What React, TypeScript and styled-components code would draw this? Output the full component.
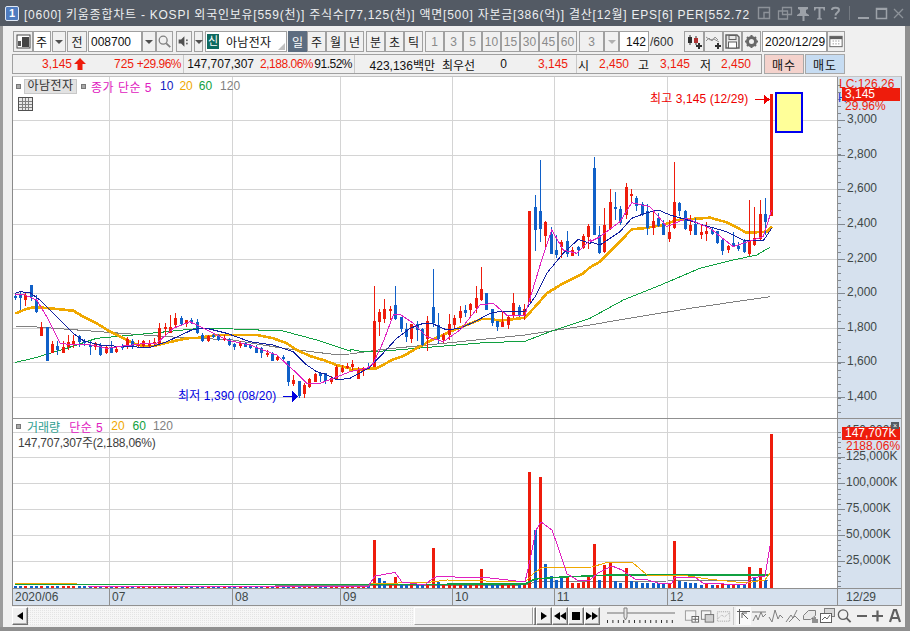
import React from 'react';
import styled, { createGlobalStyle } from 'styled-components';

const RED = '#ee1c0c';
const BLUE = '#1060c8';
const MAGENTA = '#e020c0';
const NAVY = '#1020a0';
const ORANGE = '#f0a800';
const GREEN = '#10a040';
const GREY = '#808080';
const FONT = '"Liberation Sans", "Noto Sans CJK KR", sans-serif';

type Pt = [number, number];
type Candle = { x: number; top: number; bottom: number; high: number; low: number; up: boolean };
type Row = [number, number, number, number, number, number];
type VolBar = [number, number, number];

// values were read off 3x crops, so each block has its own origin
const scale = (ox: number, oy: number, rows: Row[]): Candle[] =>
  rows.map(([x, top, bottom, high, low, up]) => ({
    x: Math.round(ox + x / 3),
    top: oy + top / 3,
    bottom: oy + bottom / 3,
    high: oy + high / 3,
    low: oy + low / 3,
    up: up === 1,
  }));

const line = (ox: number, oy: number, pts: Pt[]): Pt[] => pts.map(([x, y]) => [ox + x / 3, oy + y / 3]);

const candles: Candle[] = [
  ...scale(0, 270, [
    [46, 78, 85, 68, 90, 0], [61, 75, 83, 65, 120, 0], [76, 75, 90, 68, 107, 1], [94, 45, 80, 45, 93, 0],
    [109, 90, 125, 75, 128, 0], [124, 172, 197, 155, 197, 1], [142, 172, 272, 172, 272, 0], [157, 222, 250, 212, 250, 1],
    [172, 228, 240, 212, 255, 0], [190, 230, 248, 212, 248, 1], [205, 216, 230, 195, 240, 1], [220, 212, 224, 195, 235, 1],
    [238, 197, 215, 195, 230, 0], [253, 212, 220, 208, 228, 0], [270, 225, 230, 212, 255, 0], [286, 220, 230, 215, 240, 1],
    [301, 225, 255, 220, 258, 0], [319, 230, 250, 225, 252, 1], [334, 232, 248, 212, 250, 0], [349, 237, 245, 230, 250, 1],
    [367, 228, 232, 222, 240, 0], [382, 208, 232, 200, 238, 1], [397, 212, 232, 208, 236, 0], [415, 222, 228, 210, 232, 1],
    [430, 214, 228, 210, 232, 1], [448, 220, 228, 210, 233, 1], [463, 216, 220, 205, 225, 1], [478, 175, 222, 160, 225, 1],
    [496, 172, 178, 160, 195, 1], [511, 172, 188, 135, 190, 1], [526, 143, 165, 128, 170, 1], [544, 143, 162, 138, 165, 0],
    [559, 150, 162, 150, 172, 1], [574, 150, 160, 145, 163, 0], [592, 155, 190, 148, 192, 0], [607, 195, 213, 190, 216, 0],
    [625, 198, 214, 195, 216, 1], [640, 195, 200, 188, 205, 0], [655, 195, 210, 192, 212, 0], [673, 203, 208, 195, 213, 1],
    [688, 208, 225, 205, 228, 0], [703, 222, 230, 220, 240, 0], [721, 220, 228, 212, 235, 1], [736, 218, 230, 215, 232, 0],
    [751, 225, 233, 222, 236, 0], [769, 230, 248, 225, 250, 0], [784, 233, 248, 232, 265, 0], [802, 250, 252, 240, 262, 1],
    [817, 250, 272, 245, 273, 0], [832, 262, 270, 258, 272, 1], [850, 260, 268, 255, 275, 0], [865, 272, 337, 272, 347, 0],
    [880, 330, 342, 316, 347, 1], [898, 333, 378, 333, 385, 0], [913, 345, 372, 340, 385, 1], [928, 327, 350, 323, 353, 1],
    [946, 312, 335, 310, 337, 1], [961, 310, 318, 310, 337, 0], [976, 310, 333, 308, 342, 0], [994, 325, 335, 318, 342, 1],
    [1009, 290, 327, 285, 330, 1], [1027, 295, 305, 285, 310, 1], [1042, 288, 295, 280, 298, 1], [1057, 283, 292, 270, 300, 1],
    [1075, 300, 327, 290, 328, 1], [1090, 293, 302, 290, 318, 1], [1105, 290, 295, 278, 296, 0],
  ]),
  ...scale(350, 150, [
    [73, 513, 650, 408, 650, 1], [88, 487, 515, 478, 558, 1], [103, 478, 507, 448, 518, 1], [121, 477, 483, 468, 510, 1],
    [136, 465, 508, 408, 510, 0], [154, 500, 537, 500, 545, 0], [169, 537, 562, 520, 575, 0], [184, 522, 567, 522, 578, 1],
    [202, 522, 540, 513, 572, 0], [217, 537, 585, 535, 587, 0], [232, 513, 567, 498, 602, 1], [250, 471, 518, 357, 530, 0],
    [265, 525, 568, 488, 581, 0], [280, 555, 570, 548, 578, 1], [298, 522, 555, 491, 570, 1], [313, 504, 525, 495, 535, 1],
    [331, 483, 504, 468, 518, 1], [346, 480, 490, 465, 502, 0], [361, 461, 480, 458, 498, 1], [379, 444, 474, 408, 488, 1],
    [394, 417, 450, 351, 452, 1], [409, 429, 480, 429, 480, 0], [427, 477, 518, 477, 528, 0], [442, 513, 530, 513, 543, 0],
    [457, 515, 530, 483, 530, 1], [475, 502, 525, 498, 537, 1], [490, 459, 498, 429, 505, 1], [508, 471, 498, 465, 502, 0],
    [523, 477, 498, 462, 510, 1], [538, 183, 455, 183, 455, 1], [556, 171, 240, 135, 302, 0], [571, 183, 237, 30, 276, 0],
    [586, 216, 258, 213, 290, 1], [604, 252, 312, 232, 312, 0], [619, 300, 315, 255, 325, 0], [634, 276, 291, 270, 325, 1],
    [652, 273, 312, 243, 320, 0], [667, 300, 318, 290, 318, 1], [685, 291, 300, 288, 318, 0], [700, 258, 294, 252, 296, 1],
    [715, 228, 262, 222, 296, 1], [733, 54, 255, 21, 255, 0], [748, 255, 310, 228, 312, 0],
  ]),
  ...scale(590, 150, [
    [43, 225, 305, 174, 308, 1], [61, 156, 237, 117, 240, 1], [76, 171, 177, 126, 210, 0], [91, 177, 218, 168, 225, 0],
    [109, 111, 196, 99, 208, 1], [124, 132, 138, 117, 156, 1], [139, 144, 168, 138, 183, 0], [157, 162, 195, 156, 198, 0],
    [172, 183, 234, 162, 255, 0], [190, 213, 234, 186, 255, 1], [205, 204, 228, 189, 232, 0], [220, 219, 255, 210, 255, 0],
    [238, 246, 267, 210, 276, 1], [253, 156, 234, 36, 237, 1], [268, 159, 183, 156, 198, 0], [286, 183, 237, 180, 240, 0],
    [301, 225, 243, 195, 255, 1], [316, 222, 255, 204, 255, 0], [334, 246, 255, 225, 267, 1], [349, 243, 252, 216, 273, 1],
    [367, 240, 252, 234, 255, 0], [382, 243, 279, 243, 282, 0], [397, 270, 303, 267, 315, 0], [415, 288, 300, 285, 309, 1],
    [430, 279, 291, 246, 291, 0], [445, 288, 297, 276, 303, 0], [463, 270, 306, 267, 309, 0], [478, 270, 312, 150, 318, 1],
    [493, 264, 285, 171, 288, 1], [511, 192, 267, 150, 270, 1], [526, 192, 216, 144, 255, 0],
  ]),
  { x: 771, top: 94, bottom: 216, high: 94, low: 216, up: true },
];

const ma5: Pt[] = [
  ...line(0, 270, [[46, 72], [75, 75], [110, 90], [140, 140], [180, 220], [220, 225], [260, 222], [320, 235], [370, 228], [420, 222], [470, 220], [520, 175], [570, 155], [620, 180], [680, 210], [750, 225], [830, 255], [880, 300], [920, 340], [960, 340], [1000, 325], [1050, 305]]),
  ...line(350, 150, [[50, 655], [70, 640], [100, 575], [130, 495], [150, 493], [190, 520], [230, 560], [280, 575], [330, 540], [390, 465], [430, 460], [470, 495], [525, 495], [575, 330], [605, 240], [640, 300], [680, 310], [720, 270]]),
  ...line(590, 150, [[0, 275], [30, 260], [90, 215], [125, 158], [180, 170], [230, 230], [290, 205], [360, 235], [430, 290], [490, 270], [520, 260], [545, 180]]),
];
const ma10: Pt[] = [
  ...line(0, 270, [[46, 70], [60, 65], [90, 68], [120, 90], [160, 130], [220, 190], [250, 212], [300, 225], [370, 230], [450, 232], [500, 215], [580, 178], [620, 175], [680, 190], [750, 215], [820, 225], [880, 245], [920, 285], [950, 305], [975, 312], [1010, 330], [1050, 325]]),
  ...line(350, 150, [[55, 655], [90, 620], [140, 565], [180, 535], [220, 520], [250, 522], [290, 540], [330, 535], [380, 512], [420, 490], [460, 483], [525, 483], [555, 440], [590, 370], [640, 310], [685, 268], [720, 280]]),
  ...line(590, 150, [[0, 275], [30, 285], [60, 265], [90, 245], [125, 205], [165, 190], [205, 180], [240, 195], [300, 212], [340, 225], [410, 245], [460, 270], [520, 272], [545, 235]]),
];
const ma20: Pt[] = [
  ...line(0, 270, [[46, 130], [60, 125], [75, 118], [95, 113], [130, 113], [170, 117], [220, 122], [250, 140], [290, 160], [330, 185], [370, 205], [400, 220], [430, 228], [460, 228], [500, 218], [560, 205], [600, 203], [650, 195], [770, 195], [820, 205], [860, 220], [890, 240], [930, 258], [970, 270], [1010, 285], [1050, 295]]),
  ...line(350, 150, [[0, 660], [80, 655], [130, 628], [160, 618], [200, 595], [250, 568], [300, 545], [350, 525], [395, 507], [420, 507], [450, 512], [525, 503], [560, 465], [590, 430], [640, 400], [700, 370]]),
  ...line(590, 150, [[0, 352], [30, 335], [70, 295], [125, 238], [160, 235], [220, 225], [260, 210], [360, 203], [410, 217], [470, 248], [530, 245], [545, 230]]),
];
const ma60: Pt[] = [
  ...line(0, 270, [[46, 277], [100, 265], [200, 235], [290, 205], [400, 195], [500, 185], [600, 175], [700, 177], [850, 183], [950, 210], [1050, 243]]),
  ...line(350, 150, [[0, 598], [40, 605], [75, 605], [200, 595], [400, 578], [525, 574], [600, 545], [720, 505]]),
  ...line(590, 150, [[0, 505], [100, 450], [200, 410], [330, 355], [430, 330], [500, 315], [540, 292]]),
];
const ma120: Pt[] = [
  ...line(0, 270, [[46, 168], [100, 170], [300, 185], [500, 200], [700, 210], [850, 235], [1000, 253]]),
  ...line(350, 150, [[0, 612], [100, 598], [300, 578], [525, 555], [720, 525]]),
  ...line(590, 150, [[100, 508], [300, 475], [540, 440]]),
];

// volume bars that stand out: x, top y, red (1) or blue (0)
const volumeBars: VolBar[] = [
  [374, 540, 1], [379, 578, 0], [384, 581, 0], [395, 577, 1], [433, 548, 1], [438, 582, 0],
  ...([
    [75, 117, 1], [270, 102, 0], [288, 138, 0], [303, 150, 0], [320, 142, 0], [337, 140, 1], [353, 160, 1], [370, 160, 1],
    [385, 155, 1], [400, 138, 1], [418, 42, 1], [433, 150, 0], [448, 105, 1], [465, 100, 1], [480, 152, 0], [497, 158, 0],
    [513, 113, 1], [530, 152, 0], [545, 155, 0], [562, 158, 0], [577, 158, 0], [595, 160, 0], [610, 160, 0], [625, 163, 0],
    [640, 160, 1], [658, 33, 1], [673, 152, 0], [690, 156, 0], [706, 158, 0], [722, 160, 0], [738, 165, 0], [755, 162, 1],
    [771, 165, 0], [787, 165, 1], [803, 162, 1], [819, 165, 0], [835, 162, 1], [851, 165, 0], [867, 165, 0], [883, 110, 1],
    [898, 145, 0], [915, 113, 1], [932, 150, 0],
  ] as VolBar[]).map(([x, y, up]): VolBar => [455 + x / 3, 530 + y / 3, up]),
  [529, 472, 1], [535, 530, 0], [540, 477, 1], [771, 434, 1],
];

const volumeBar = (c: Candle) => {
  const hit = volumeBars.find(([x]) => Math.abs(x - c.x) < 2.5);
  if (hit) return { top: hit[1], color: hit[2] ? RED : BLUE };
  return { top: c.x > 372 ? 584 : 586, color: c.up ? RED : BLUE };
};

const volMa5: Pt[] = [
  [88, 586.5], [270, 586.5], [368, 586.5], [375, 576], [395, 572.5], [402, 582], [425, 585], [432, 579], [437, 576.5], [490, 578], [525, 582], [530, 560], [536, 530], [541, 522], [552, 530], [558, 547], [567, 574], [578, 580.5], [590, 580], [598, 573], [612, 566], [622, 570], [635, 579], [648, 580], [658, 583], [672, 583], [675, 577], [695, 577], [703, 583], [745, 585], [752, 578], [765, 576], [770, 546],
];
const volMa20Head: Pt[] = [[15, 583], [77, 583]];
const volMa20: Pt[] = [
  [370, 583.5], [427, 582.5], [447, 580], [525, 582], [535, 572], [542, 568], [592, 567], [605, 563], [632, 562], [647, 575], [688, 576], [708, 579], [745, 583], [765, 580], [770, 573],
];
const volMa60: Pt[] = [
  [15, 584.5], [275, 584.5], [370, 584.5], [525, 584], [535, 579], [562, 577], [612, 575], [672, 575], [768, 575],
];
const volMa120: Pt[] = [
  [275, 585.5], [525, 585], [535, 582], [668, 581], [698, 580], [768, 580],
];

const priceTicks = [
  ['3,000', 120], ['2,800', 155], ['2,600', 189], ['2,400', 224], ['2,200', 259],
  ['2,000', 293], ['1,800', 328], ['1,600', 362], ['1,400', 397],
] as const;
const volumeTicks = [
  ['125,000K', 457], ['100,000K', 483], ['75,000K', 509], ['50,000K', 535], ['25,000K', 561],
] as const;
const monthLines = [109, 232, 340, 452, 554, 667];
const dateCells = [
  { label: '2020/06', w: 97 }, { label: '07', w: 123 }, { label: '08', w: 108 }, { label: '09', w: 112 },
  { label: '10', w: 102 }, { label: '11', w: 113 }, { label: '12', w: 170 },
];
const intervals = ['1', '3', '5', '10', '15', '30', '45', '60'];
const sliderTicks = Array.from({ length: 13 }, (_, i) => 3 + i * 5.4);

const toPoints = (pts: Pt[]) => pts.map(([x, y]) => `${x.toFixed(1)},${y.toFixed(1)}`).join(' ');

const GlobalStyle = createGlobalStyle`
  html, body { margin: 0; padding: 0; width: 910px; height: 631px; overflow: hidden; background: #f0f0f0; }
  * { box-sizing: border-box; }
  body { font-family: ${FONT}; font-size: 12px; }
`;

const Frame = styled.div`
  width: 910px;
  height: 631px;
  display: flex;
  flex-direction: column;
  background: #f0f0f0;
  border-bottom: 4px solid #8f8f8f;
`;

const TitleBar = styled.div`
  height: 26px;
  flex: none;
  display: flex;
  align-items: center;
  padding-left: 5px;
  background: #535a64;
  color: #eceef0;
  overflow: hidden;
`;

const Badge = styled.div`
  width: 14px;
  height: 15px;
  flex: none;
  border: 1px solid #dfe8f5;
  border-radius: 2px;
  background: #4f7cc0;
  color: #fff;
  font-weight: 700;
  font-size: 11px;
  line-height: 13px;
  text-align: center;
`;

const TitleText = styled.div`
  width: 731px;
  flex: none;
  margin-left: 5px;
  font-size: 12px;
  letter-spacing: 0.76px;
  white-space: pre;
  overflow: hidden;
`;

const WindowIcons = styled.div`
  display: flex;
  align-items: center;
`;

const Body = styled.div`
  flex: 1;
  display: flex;
  flex-direction: column;
  padding: 5px 8px 2px 0;
  border-left: 3px solid #9c9c9c;
  border-right: 5px solid #8f8f8f;
`;

const Toolbar = styled.div`
  height: 21px;
  flex: none;
  display: flex;
  align-items: stretch;
  margin-left: 10px;
`;

const ToolButton = styled.div<{ $w: number; $gap?: number; $active?: boolean; $faint?: boolean }>`
  width: ${p => p.$w}px;
  margin-left: ${p => p.$gap ?? 0}px;
  flex: none;
  display: flex;
  align-items: center;
  justify-content: center;
  border: 1px solid ${p => (p.$active ? '#5d6d80' : '#a0a0a0')};
  background: ${p => (p.$active ? '#5d6d80' : '#f0f0f0')};
  color: ${p => (p.$active ? '#fff' : p.$faint ? '#8a8a8a' : '#202020')};
  font-size: 12px;
`;

const Field = styled.div<{ $w: number; $gap?: number; $right?: boolean }>`
  width: ${p => p.$w}px;
  margin-left: ${p => p.$gap ?? 0}px;
  flex: none;
  display: flex;
  align-items: center;
  justify-content: ${p => (p.$right ? 'flex-end' : 'flex-start')};
  padding: 0 2px;
  border: 1px solid #a0a0a0;
  background: #fff;
  color: #101010;
  font-size: 12px;
  white-space: nowrap;
`;

const NameField = styled(Field)`
  position: relative;
  gap: 7px;
  padding-left: 1px;
  letter-spacing: 0.3px;
  &::after {
    content: '';
    position: absolute;
    right: 1px;
    bottom: 1px;
    border-style: solid;
    border-width: 0 0 7px 7px;
    border-color: transparent transparent #c0c0c0 transparent;
  }
`;

const MarketTag = styled.span`
  width: 12px;
  height: 15px;
  flex: none;
  background: #0e6a60;
  color: #fff;
  font-size: 11px;
  line-height: 15px;
  letter-spacing: 0;
  text-align: center;
`;

const Caret = styled.span<{ $light?: boolean }>`
  border-style: solid;
  border-width: 4px 4px 0;
  border-color: ${p => (p.$light ? '#b0b0b0' : '#505050')} transparent transparent;
`;

const PlainLabel = styled.span<{ $w: number; $gap?: number }>`
  width: ${p => p.$w}px;
  margin-left: ${p => p.$gap ?? 0}px;
  flex: none;
  display: flex;
  align-items: center;
  color: #303030;
`;

const QuoteRow = styled.div`
  height: 20px;
  flex: none;
  display: flex;
  margin: 2px 0 2px 9px;
`;

const QuoteBar = styled.div`
  width: 750px;
  flex: none;
  display: flex;
  border: 1px solid #a0a0a0;
`;

const QuoteCell = styled.div<{ $w: number }>`
  width: ${p => p.$w}px;
  flex: none;
  display: flex;
  align-items: center;
  border-right: 1px solid #c8c8c8;
  white-space: nowrap;
  &:last-child { border-right: 0; }
`;

const Quote = styled.span<{ $w: number; $red?: boolean; $tight?: boolean }>`
  width: ${p => p.$w}px;
  flex: none;
  text-align: right;
  color: ${p => (p.$red ? RED : '#101010')};
  font-size: 12px;
  letter-spacing: ${p => (p.$tight ? '-0.5px' : '0')};
`;

const UpArrow = styled.svg`
  width: 14px;
  height: 14px;
  flex: none;
  margin-left: 1px;
`;

const TradeButton = styled.div<{ $bg: string; $gap: number }>`
  width: 40px;
  margin-left: ${p => p.$gap}px;
  flex: none;
  display: flex;
  align-items: center;
  justify-content: center;
  background: ${p => p.$bg};
  border: 1px solid #a8a8a8;
  color: #101010;
  letter-spacing: 1px;
`;

const ChartBox = styled.div`
  flex: none;
  width: 890px;
  margin-left: 9px;
  border-left: 1px solid #8a8a8a;
  border-top: 1px solid #c4c4c4;
  border-right: 1px solid #a0a0a0;
  display: flex;
  flex-direction: column;
`;

const Pane = styled.div<{ $h: number; $divided?: boolean }>`
  position: relative;
  height: ${p => p.$h}px;
  flex: none;
  display: grid;
  grid-template-columns: 824px 64px;
  background: #fff;
  border-top: ${p => (p.$divided ? '1px solid #909090' : '0')};
`;

const Plot = styled.svg`
  display: block;
  width: 824px;
  height: 100%;
  shape-rendering: crispEdges;
`;

const Axis = styled.svg`
  display: block;
  width: 64px;
  height: 100%;
  background: #d6e1ee;
  border-left: 1px solid #909090;
  shape-rendering: crispEdges;
`;

const AxisLabel = styled.text`
  fill: #404848;
  font-family: ${FONT};
  font-size: 12px;
  shape-rendering: auto;
`;

const Note = styled.text<{ $color: string }>`
  fill: ${p => p.$color};
  font-family: ${FONT};
  font-size: 12px;
  letter-spacing: 0.1px;
`;

const Legend = styled.div<{ $top: number }>`
  position: absolute;
  left: 3px;
  top: ${p => p.$top}px;
  display: flex;
  align-items: center;
  height: 14px;
  font-size: 12px;
  white-space: nowrap;
`;

const LegendDot = styled.span<{ $gap?: number }>`
  width: 5px;
  height: 5px;
  margin-left: ${p => p.$gap ?? 0}px;
  background: #a8a8a8;
  border: 1px solid #787878;
`;

const LegendName = styled.span`
  height: 15px;
  width: 53px;
  margin: 0 4px 0 3px;
  background: #e2e2e2;
  border: 1px solid #c8c8c8;
  color: #303030;
  line-height: 13px;
  text-align: center;
  letter-spacing: 0.4px;
`;

const LegendItem = styled.span<{ $color: string; $gap: number; $wide?: boolean }>`
  margin-left: ${p => p.$gap}px;
  color: ${p => p.$color};
  letter-spacing: ${p => (p.$wide ? '0.5px' : '0')};
`;

const VolumeText = styled.div`
  position: absolute;
  left: 5px;
  top: 14px;
  font-size: 12px;
  letter-spacing: -0.25px;
  color: #404040;
  white-space: nowrap;
`;

const GridButton = styled.svg`
  position: absolute;
  left: 5px;
  top: 20px;
  width: 15px;
  height: 14px;
`;

const DateAxis = styled.div`
  height: 18px;
  flex: none;
  display: flex;
  background: #d6e1ee;
  border-top: 1px solid #909090;
  border-bottom: 1px solid #909090;
`;

const DateCell = styled.div<{ $w: number }>`
  width: ${p => p.$w}px;
  flex: none;
  padding-left: 2px;
  border-right: 1px solid #909090;
  color: #404848;
  font-size: 12px;
  line-height: 16px;
`;

const EndDate = styled(DateCell)`
  border-right: 0;
  padding-left: 8px;
`;

const Tag = styled.div<{ $top: number; $h: number }>`
  position: absolute;
  right: 1px;
  top: ${p => p.$top}px;
  width: 58px;
  height: ${p => p.$h}px;
  padding-left: 3px;
  background: ${RED};
  color: #fff;
  font-size: 12px;
  line-height: ${p => p.$h}px;
`;

const AxisNote = styled.div<{ $top: number; $left: number; $color: string }>`
  position: absolute;
  left: ${p => 825 + p.$left}px;
  top: ${p => p.$top}px;
  color: ${p => p.$color};
  font-size: 12px;
  line-height: 13px;
  white-space: nowrap;
`;

const CloseMark = styled.div`
  position: absolute;
  right: 2px;
  top: 3px;
  width: 8px;
  height: 7px;
  background: #555c62;
  color: #fff;
  font-size: 7px;
  line-height: 7px;
  text-align: center;
`;

const ScrollRow = styled.div`
  height: 18px;
  flex: none;
  display: flex;
  align-items: stretch;
  margin: 1px 0 0 9px;
`;

const ScrollArrow = styled.div<{ $w?: number }>`
  width: ${p => p.$w ?? 16}px;
  flex: none;
  display: flex;
  align-items: center;
  justify-content: center;
  background: #f0f0f0;
  border: 1px solid;
  border-color: #fff #707070 #707070 #fff;
  box-shadow: inset -1px -1px 0 #b0b0b0;
`;

const Track = styled.div`
  width: 386px;
  flex: none;
  background-color: #f6f6f6;
  background-image: linear-gradient(45deg, #e4e4e4 25%, transparent 25%, transparent 75%, #e4e4e4 75%);
  background-size: 2px 2px;
`;

const Thumb = styled.div`
  width: 119px;
  flex: none;
  background: #f0f0f0;
  border: 1px solid;
  border-color: #fff #a0a0a0 #a0a0a0 #fff;
`;

const Tri = styled.span<{ $left?: boolean }>`
  border-style: solid;
  border-width: 4px 0 4px 6px;
  border-color: transparent transparent transparent #000;
  transform: ${p => (p.$left ? 'scaleX(-1)' : 'none')};
`;

const Square = styled.span`
  width: 8px;
  height: 8px;
  background: #000;
`;

const SliderBox = styled.svg`
  width: 74px;
  height: 18px;
  flex: none;
  margin-left: 4px;
`;

const ChartTools = styled.div`
  display: flex;
  align-items: center;
  margin-left: 6px;
`;

const ToolIcon = styled.svg<{ $w?: number; $selected?: boolean }>`
  width: ${p => p.$w ?? 17}px;
  height: 18px;
  flex: none;
  background: ${p => (p.$selected ? '#fafafa' : 'transparent')};
`;

const Svg16 = styled.svg`
  width: 17px;
  height: 17px;
  display: block;
`;

const TitleIcon = styled.svg<{ $w?: number }>`
  width: ${p => p.$w ?? 20}px;
  height: 16px;
  flex: none;
`;

const Candles = () => (
  <g>
    {candles.map((c, i) => {
      const color = c.up ? RED : BLUE;
      return (
        <g key={i}>
          <rect x={c.x} y={c.high} width={1} height={Math.max(c.low - c.high, 1)} fill={color} />
          <rect x={c.x - 1} y={c.top} width={3} height={Math.max(c.bottom - c.top, 2)} fill={color} />
        </g>
      );
    })}
  </g>
);

const Grid = ({ rows, top, bottom }: { rows: number[]; top: number; bottom: number }) => (
  <g stroke="#d4d4d4" strokeWidth={1}>
    {rows.map(y => <line key={y} x1={13} x2={837} y1={y + 0.5} y2={y + 0.5} />)}
    {monthLines.map(x => <line key={x} x1={x + 0.5} x2={x + 0.5} y1={top} y2={bottom} />)}
  </g>
);

const MaLine = ({ pts, color, w = 1 }: { pts: Pt[]; color: string; w?: number }) => (
  <polyline points={toPoints(pts)} fill="none" stroke={color} strokeWidth={w} />
);

const Ticks = ({ minY, maxY, step, majors }: { minY: number; maxY: number; step: number; majors: number[] }) => {
  const marks: number[] = [];
  for (let y = minY; y < maxY; y += step) marks.push(y);
  return (
    <g stroke="#808890">
      {marks.map(y => <line key={y} x1={0} x2={3} y1={Math.round(y) + 0.5} y2={Math.round(y) + 0.5} />)}
      {majors.map(y => <line key={y} x1={0} x2={7} y1={y + 0.5} y2={y + 0.5} />)}
    </g>
  );
};

const LayoutIcon = () => (
  <Svg16 viewBox="0 0 17 17">
    <rect x="2" y="2" width="13" height="13" fill="#fff" stroke="#444" />
    <rect x="7" y="4" width="7" height="10" fill="#444" />
    <rect x="3" y="8" width="3" height="5" fill="#555" />
  </Svg16>
);

const SearchIcon = () => (
  <Svg16 viewBox="0 0 17 17">
    <circle cx="7" cy="7" r="4.5" fill="none" stroke="#808080" strokeWidth="1.5" />
    <path d="M10.5 10.5 L15 15" stroke="#808080" strokeWidth="2" />
  </Svg16>
);

const SpeakerIcon = () => (
  <Svg16 viewBox="0 0 17 17">
    <path d="M2 6h3l4-4v13l-4-4H2z" fill="#505050" />
    <rect x="11" y="6" width="2" height="2" fill="#606060" />
    <rect x="11" y="10" width="2" height="2" fill="#606060" />
  </Svg16>
);

const CandlePlusIcon = () => (
  <Svg16 viewBox="0 0 17 17">
    <path d="M4 2v10M10 3v9" stroke="#303030" />
    <rect x="2" y="4" width="4" height="6" fill="#303030" />
    <rect x="8" y="5" width="4" height="5" fill="#b03030" />
    <path d="M13 10v6M10 13h6" stroke="#303030" strokeWidth="2" />
  </Svg16>
);

const LinePlusIcon = () => (
  <Svg16 viewBox="0 0 17 17">
    <path d="M1 8l3-3 3 3 3-4 3 3M1 4l4 3 4-1 5 3" fill="none" stroke="#909090" />
    <path d="M13 10v6M10 13h6" stroke="#303030" strokeWidth="2" />
  </Svg16>
);

const SaveIcon = () => (
  <Svg16 viewBox="0 0 17 17">
    <path d="M2 2h11l2 2v11H2z" fill="#e8e8e8" stroke="#606060" strokeWidth="1.4" />
    <rect x="5" y="2.5" width="7" height="4" fill="none" stroke="#606060" />
    <rect x="4.5" y="9" width="8" height="6" fill="#fff" stroke="#606060" />
  </Svg16>
);

const GearIcon = () => (
  <Svg16 viewBox="0 0 17 17">
    <circle cx="8.5" cy="8.5" r="4" fill="none" stroke="#686868" strokeWidth="3" />
    <path d="M8.5 2v3M8.5 12v3M2 8.5h3M12 8.5h3M4 4l2 2M11 11l2 2M13 4l-2 2M6 11l-2 2" stroke="#686868" strokeWidth="2" />
  </Svg16>
);

const CalendarIcon = () => (
  <Svg16 viewBox="0 0 17 17">
    <rect x="2" y="3" width="13" height="11" fill="#fff" stroke="#606060" />
    <rect x="2" y="3" width="13" height="3" fill="#606060" />
    <path d="M5 8h1M8 8h1M11 8h1M5 11h1M8 11h1M11 11h1" stroke="#606060" />
  </Svg16>
);

const TitleButtons = () => (
  <WindowIcons>
    <TitleIcon viewBox="0 0 20 16">
      <path d="M3.5 2.5h11v11h-11zM9 13V7.500h5.500" fill="none" stroke="#8d9299" strokeWidth="1.4" />
    </TitleIcon>
    <TitleIcon viewBox="0 0 20 16">
      <path d="M7.500 2.500h9v7h-9zM3.500 6h9v8h-9z" fill="#535a64" stroke="#8d9299" strokeWidth="1.3" />
    </TitleIcon>
    <TitleIcon $w={17} viewBox="0 0 17 16">
      <path d="M3 2h10v2l-2 1v3l3 2v1H9.500v5h-2v-5H2v-1l3-2V5L3 4z" fill="#9da2a9" />
    </TitleIcon>
    <TitleIcon $w={15} viewBox="0 0 15 16">
      <path d="M2 2h11v3.500h-1.200l-.8-2H8.500v9.500l1.500.5v1H5v-1l1.500-.5V3.500H4l-.8 2H2z" fill="#9da2a9" />
    </TitleIcon>
    <TitleIcon $w={27} viewBox="0 0 27 16">
      <path d="M5 5c0-3 7-3 7 0 0 2.500-3.500 2.500-3.500 5.500" fill="none" stroke="#9da2a9" strokeWidth="2" />
      <rect x="7.500" y="12" width="2" height="2" fill="#9da2a9" />
      <path d="M22.500 1v14" stroke="#747a82" />
    </TitleIcon>
    <TitleIcon $w={19} viewBox="0 0 19 16">
      <rect x="4" y="12" width="11" height="2" fill="#9da2a9" />
    </TitleIcon>
    <TitleIcon $w={20} viewBox="0 0 20 16">
      <path d="M3.500 3.500h10v10h-10z" fill="none" stroke="#9da2a9" strokeWidth="1.5" />
      <rect x="3" y="3" width="11" height="2" fill="#9da2a9" />
    </TitleIcon>
    <TitleIcon $w={12} viewBox="0 0 12 16">
      <path d="M1 4l9 9M10 4L1 13" stroke="#8d9299" strokeWidth="1.3" />
    </TitleIcon>
  </WindowIcons>
);

const BottomTools = () => (
  <ChartTools>
    <ToolIcon $w={16} viewBox="0 0 17 18">
      <rect x="1.500" y="3.500" width="11" height="10" fill="#f4f4f4" stroke="#9a9a9a" />
      <rect x="8.500" y="9.500" width="7" height="6" fill="#fff" stroke="#606060" />
      <path d="M12 10v5M9 12.500h6" stroke="#606060" />
    </ToolIcon>
    <ToolIcon $w={16} viewBox="0 0 17 18">
      <rect x="1.500" y="3.500" width="10" height="9" fill="#f4f4f4" stroke="#808080" />
      <rect x="5.500" y="7.500" width="9" height="8" fill="#d0d0d0" stroke="#707070" />
    </ToolIcon>
    <ToolIcon $w={16} viewBox="0 0 17 18">
      <rect x="1.500" y="4.500" width="13" height="10" fill="none" stroke="#a0a0a0" strokeDasharray="1 1" />
      <path d="M2 12l4-4 3 2 5-4" fill="none" stroke="#a0a0a0" strokeDasharray="1 1" />
    </ToolIcon>
    <ToolIcon $w={4} viewBox="0 0 4 18">
      <path d="M1.500 0v18" stroke="#c8c8c8" />
    </ToolIcon>
    <ToolIcon $w={15} $selected viewBox="0 0 15 18">
      <path d="M3.500 2v15M1 4.500h13M6 6l6 6M6 6v5M6 6h5" fill="none" stroke="#606060" />
    </ToolIcon>
    <ToolIcon viewBox="0 0 17 18">
      <path d="M1 5h14M2 14l3-6 2 5 3-8 2 5 3-3" fill="none" stroke="#808080" />
    </ToolIcon>
    <ToolIcon viewBox="0 0 17 18">
      <path d="M1 10l3 5 3-12 3 9 2-4 3 3" fill="none" stroke="#808080" />
    </ToolIcon>
    <ToolIcon viewBox="0 0 17 18">
      <path d="M1 15l5-7 2 3 4-8M4 15l6-6 5 5" fill="none" stroke="#808080" />
    </ToolIcon>
    <ToolIcon viewBox="0 0 17 18">
      <path d="M1.500 8.500l5-5h7v5l-5 4h-7z" fill="#e8e8e8" stroke="#808080" />
      <path d="M11 11v5M13 10v6M15 12v4" stroke="#303030" />
    </ToolIcon>
    <ToolIcon viewBox="0 0 17 18">
      <rect x="5.500" y="1.500" width="10" height="8" fill="#d8d8d8" stroke="#808080" />
      <rect x="1.500" y="6.500" width="11" height="9" fill="#fff" stroke="#606060" />
      <path d="M3 13l3-3 2 2 3-4" fill="none" stroke="#606060" />
    </ToolIcon>
    <ToolIcon $w={16} viewBox="0 0 17 18">
      <circle cx="7.500" cy="7.500" r="5" fill="none" stroke="#606060" strokeWidth="1.4" />
      <path d="M11 11l4.500 4.500" stroke="#606060" strokeWidth="2" />
    </ToolIcon>
    <ToolIcon viewBox="0 0 17 18">
      <rect x="5" y="8" width="10" height="2" fill="#606060" />
    </ToolIcon>
    <ToolIcon viewBox="0 0 17 18">
      <path d="M3 9h11M8.500 3.500v11" stroke="#606060" strokeWidth="2.200" />
    </ToolIcon>
    <ToolIcon viewBox="0 0 17 18">
      <path d="M4 15L8 3h2l4 12M5.500 11h7" fill="none" stroke="#606060" strokeWidth="2.200" />
    </ToolIcon>
  </ChartTools>
);

const App = () => (
  <>
    <GlobalStyle />
    <Frame>
      <TitleBar>
        <Badge>1</Badge>
        <TitleText>[0600] 키움종합차트 - KOSPI 외국인보유[559(천)] 주식수[77,125(천)] 액면[500] 자본금[386(억)] 결산[12월] EPS[6] PER[552.72</TitleText>
        <TitleButtons />
      </TitleBar>
      <Body>
        <Toolbar>
          <ToolButton $w={20}><LayoutIcon /></ToolButton>
          <Field $w={18}>주</Field>
          <ToolButton $w={14} $gap={1}><Caret /></ToolButton>
          <ToolButton $w={20} $gap={1}>전</ToolButton>
          <Field $w={54} $gap={1}>008700</Field>
          <ToolButton $w={14}><Caret /></ToolButton>
          <ToolButton $w={17}><SearchIcon /></ToolButton>
          <ToolButton $w={16} $gap={3}><SpeakerIcon /></ToolButton>
          <ToolButton $w={9} $gap={2}><Caret /></ToolButton>
          <NameField $w={82} $gap={2}><MarketTag>신</MarketTag>아남전자</NameField>
          <ToolButton $w={19} $gap={1} $active>일</ToolButton>
          <ToolButton $w={19}>주</ToolButton>
          <ToolButton $w={19}>월</ToolButton>
          <ToolButton $w={19}>년</ToolButton>
          <ToolButton $w={19} $gap={2}>분</ToolButton>
          <ToolButton $w={19}>초</ToolButton>
          <ToolButton $w={19}>틱</ToolButton>
          {intervals.map((n, i) => (
            <ToolButton key={n} $w={19} $gap={i === 0 ? 2 : 0} $faint>{n}</ToolButton>
          ))}
          <ToolButton $w={25} $gap={2} $faint>3</ToolButton>
          <ToolButton $w={15}><Caret $light /></ToolButton>
          <Field $w={30} $right>142</Field>
          <PlainLabel $w={34} $gap={1}>/600</PlainLabel>
          <ToolButton $w={20}><CandlePlusIcon /></ToolButton>
          <ToolButton $w={19}><LinePlusIcon /></ToolButton>
          <ToolButton $w={19}><SaveIcon /></ToolButton>
          <ToolButton $w={19}><GearIcon /></ToolButton>
          <Field $w={65} $gap={1}>2020/12/29</Field>
          <ToolButton $w={18}><CalendarIcon /></ToolButton>
        </Toolbar>
        <QuoteRow>
          <QuoteBar>
            <QuoteCell $w={171}>
              <Quote $w={59} $red>3,145</Quote>
              <UpArrow viewBox="0 0 14 14"><path d="M7 1l6 6H9.500v6h-5V7H1z" fill={RED} /></UpArrow>
              <Quote $w={47} $red>725</Quote>
              <Quote $w={47} $red $tight>+29.96%</Quote>
            </QuoteCell>
            <QuoteCell $w={171}>
              <Quote $w={70}>147,707,307</Quote>
              <Quote $w={59} $red $tight>2,188.06%</Quote>
              <Quote $w={39} $tight>91.52%</Quote>
            </QuoteCell>
            <QuoteCell $w={222}>
              <Quote $w={80}>423,136백만</Quote>
              <Quote $w={40}>최우선</Quote>
              <Quote $w={32}>0</Quote>
              <Quote $w={61} $red>3,145</Quote>
            </QuoteCell>
            <QuoteCell $w={184}>
              <Quote $w={12}>시</Quote>
              <Quote $w={40} $red>2,450</Quote>
              <Quote $w={20}>고</Quote>
              <Quote $w={41} $red>3,145</Quote>
              <Quote $w={21}>저</Quote>
              <Quote $w={40} $red>2,450</Quote>
            </QuoteCell>
          </QuoteBar>
          <TradeButton $bg="#f4d2cc" $gap={2}>매수</TradeButton>
          <TradeButton $bg="#c6dcf2" $gap={1}>매도</TradeButton>
        </QuoteRow>
        <ChartBox>
          <Pane $h={341}>
            <Plot viewBox="13 77 824 341">
              <Grid rows={priceTicks.map(t => t[1])} top={77} bottom={418} />
              <MaLine pts={ma120} color={GREY} />
              <MaLine pts={ma60} color={GREEN} />
              <MaLine pts={ma20} color={ORANGE} w={2.6} />
              <Candles />
              <MaLine pts={ma10} color={NAVY} />
              <MaLine pts={ma5} color={MAGENTA} />
              <rect x="776" y="93" width="26" height="39" fill="#ffff99" stroke="#0000f0" strokeWidth="2" />
              <Note $color="#ee0000" x={650} y={103}>최고 3,145 (12/29)</Note>
              <path d="M755 99.500h10" stroke="#ee0000" strokeWidth="1" />
              <path d="M764 95l6 4.500-6 4.500z" fill="#ee0000" />
              <Note $color="#0000e0" x={178} y={400}>최저 1,390 (08/20)</Note>
              <path d="M283 396.500h10" stroke="#0000e0" strokeWidth="1" />
              <path d="M292 391l6 5.500-6 5.500z" fill="#0000e0" />
            </Plot>
            <Axis viewBox="0 77 63 341">
              <Ticks minY={85} maxY={418} step={6.95} majors={priceTicks.map(t => t[1])} />
              {priceTicks.map(([label, y]) => <AxisLabel key={label} x={9} y={y + 3}>{label}</AxisLabel>)}
            </Axis>
            <Legend $top={2}>
              <LegendDot />
              <LegendName>아남전자</LegendName>
              <LegendDot />
              <LegendItem $color={MAGENTA} $gap={5} $wide>종가 단순 5</LegendItem>
              <LegendItem $color="#1020c0" $gap={8}>10</LegendItem>
              <LegendItem $color={ORANGE} $gap={6}>20</LegendItem>
              <LegendItem $color={GREEN} $gap={6}>60</LegendItem>
              <LegendItem $color={GREY} $gap={8}>120</LegendItem>
            </Legend>
            <GridButton viewBox="0 0 15 14">
              <rect x="0.5" y="0.5" width="14" height="13" fill="#e8e8e8" stroke="#505050" />
              <path d="M1 4.500h13M1 7.500h13M1 10.500h13M4.500 1v12M7.500 1v12M10.500 1v12" stroke="#808080" />
            </GridButton>
            <AxisNote $top={1} $left={1} $color={RED}>LC:126.26</AxisNote>
            <AxisNote $top={15} $left={0} $color="#1040d0">H</AxisNote>
            <AxisNote $top={23} $left={7} $color={RED}>29.96%</AxisNote>
            <Tag $top={11} $h={13}>3,145</Tag>
          </Pane>
          <Pane $h={170} $divided>
            <Plot viewBox="13 419 824 169">
              <Grid rows={[432, 457, 483, 509, 535, 561]} top={419} bottom={588} />
              <MaLine pts={volMa120} color={GREY} />
              {candles.map((c, i) => {
                const bar = volumeBar(c);
                return <rect key={i} x={c.x - 1} y={bar.top} width={3} height={587.5 - bar.top} fill={bar.color} />;
              })}
              <MaLine pts={volMa60} color={GREEN} w={1.5} />
              <MaLine pts={volMa20Head} color={ORANGE} />
              <MaLine pts={volMa20} color={ORANGE} />
              <MaLine pts={volMa5} color={MAGENTA} />
            </Plot>
            <Axis viewBox="0 419 63 169">
              <Ticks minY={432} maxY={588} step={5.15} majors={[457, 483, 509, 535, 561]} />
              <AxisLabel x={8} y={434}>150,000K</AxisLabel>
              {volumeTicks.map(([label, y]) => <AxisLabel key={label} x={8} y={y + 3}>{label}</AxisLabel>)}
            </Axis>
            <Legend $top={0}>
              <LegendDot />
              <LegendItem $color="#30a090" $gap={6}>거래량</LegendItem>
              <LegendItem $color={MAGENTA} $gap={9} $wide>단순 5</LegendItem>
              <LegendItem $color={ORANGE} $gap={8}>20</LegendItem>
              <LegendItem $color={GREEN} $gap={8}>60</LegendItem>
              <LegendItem $color={GREY} $gap={7}>120</LegendItem>
            </Legend>
            <VolumeText>147,707,307주(2,188,06%)</VolumeText>
            <Tag $top={8} $h={13}>147,707K</Tag>
            <AxisNote $top={21} $left={8} $color={RED}>2188.06%</AxisNote>
            <CloseMark>×</CloseMark>
          </Pane>
          <DateAxis>
            {dateCells.map(d => <DateCell key={d.label} $w={d.w}>{d.label}</DateCell>)}
            <EndDate $w={64}>12/29</EndDate>
          </DateAxis>
        </ChartBox>
        <ScrollRow>
          <ScrollArrow><Tri $left /></ScrollArrow>
          <Track />
          <Thumb />
          <ScrollArrow $w={3} />
          <ScrollArrow><Tri /></ScrollArrow>
          <ScrollArrow><Tri $left /><Tri $left /></ScrollArrow>
          <ScrollArrow><Square /></ScrollArrow>
          <ScrollArrow><Tri /><Tri /></ScrollArrow>
          <SliderBox viewBox="0 0 74 18">
            <rect x="3" y="5" width="68" height="2" fill="#b0b0b0" />
            <path d="M20 1h3v9l-1.500 3-1.500-3z" fill="#e8e8e8" stroke="#808080" />
            {sliderTicks.map(x => <rect key={x} x={x} y={13} width={1} height={3} fill="#303030" />)}
          </SliderBox>
          <BottomTools />
        </ScrollRow>
      </Body>
    </Frame>
  </>
);

export default App;
